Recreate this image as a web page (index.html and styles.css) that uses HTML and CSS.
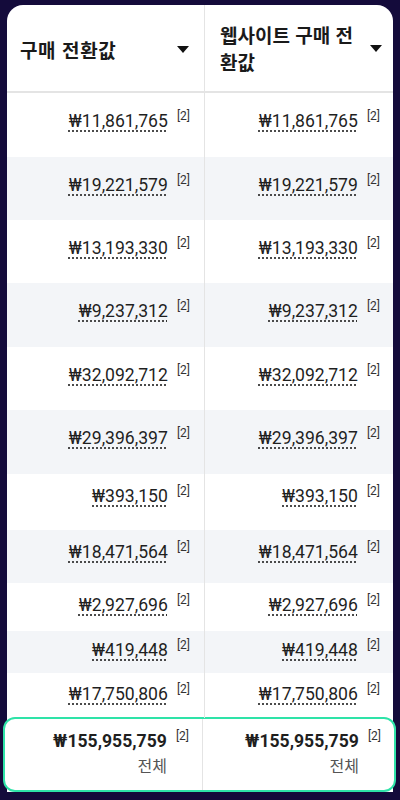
FILE: index.html
```html
<!DOCTYPE html>
<html lang="ko">
<head>
    <meta charset="UTF-8">
    <meta name="viewport" content="width=device-width, initial-scale=1.0">
    <title>구매 전환값</title>
    <link rel="stylesheet" href="styles.css">
</head>
<body>
    <div class="card">
        <div class="head">
            <div class="head-cell">
                <span class="head-title">구매 전환값</span>
                <span class="sort-arrow"></span>
            </div>
            <div class="head-cell">
                <span class="head-title">웹사이트 구매 전<br>환값</span>
                <span class="sort-arrow"></span>
            </div>
        </div>

        <div id="rows"></div>

        <div class="total">
            <div class="cell">
                <div class="value-line"><b>₩155,955,759</b><sup>[2]</sup></div>
                <div class="total-label">전체</div>
            </div>
            <div class="cell">
                <div class="value-line"><b>₩155,955,759</b><sup>[2]</sup></div>
                <div class="total-label">전체</div>
            </div>
        </div>
    </div>

    <script>
        const values = [
            '₩11,861,765', '₩19,221,579', '₩13,193,330', '₩9,237,312',
            '₩32,092,712', '₩29,396,397', '₩393,150', '₩18,471,564',
            '₩2,927,696', '₩419,448', '₩17,750,806'
        ];
        const rowsEl = document.getElementById('rows');

        values.forEach(value => {
            const row = document.createElement('div');
            row.className = 'row';
            for (let i = 0; i < 2; i++) {
                row.innerHTML += `<div class="cell"><div class="value-line"><span class="num">${value}</span><sup>[2]</sup></div></div>`;
            }
            rowsEl.appendChild(row);
        });
    </script>
</body>
</html>
```

FILE: styles.css
```css
body {
    margin: 0;
    background-color: #140b3b;
    font-family: Roboto, "Noto Sans", "Noto Sans CJK KR", sans-serif;
    color: #1f1f1f;
}
.card {
    margin: 5px 7px 0;
    background-color: white;
    border-radius: 16px 16px 0 0;
}
.head, .row, .total {
    display: grid;
    grid-template-columns: 198px 1fr;
}
.head {
    height: 86px;
    border-bottom: 2px solid #e4e4e4;
}
.head-cell {
    display: flex;
    align-items: center;
    justify-content: space-between;
    padding: 2px 15px 0 13px;
    border-right: 1px solid #e4e4e4;
}
.head-cell:last-child {
    border-right: none;
    padding: 0 11px 0 15px;
}
.head-title {
    font-family: "Noto Sans CJK KR", sans-serif;
    font-weight: bold;
    font-size: 19px;
    line-height: 27px;
    color: #1a1a1a;
}
.head-cell:first-child .head-title {
    letter-spacing: 0.6px;
}
.sort-arrow {
    width: 0;
    height: 0;
    border-left: 6px solid transparent;
    border-right: 6px solid transparent;
    border-top: 7px solid #111;
    flex-shrink: 0;
}
.cell {
    display: flex;
    flex-direction: column;
    align-items: flex-end;
    padding: 16px 14px 0 0;
    border-right: 1px solid #e4e4e4;
}
.cell:last-child {
    border-right: none;
    padding-right: 13px;
}
.row:nth-child(even) {
    background-color: #f3f5f8;
}
.row { height: 63px; }
.row:nth-child(1), .row:nth-child(4), .row:nth-child(6) { height: 64px; }
.row:nth-child(7) { height: 56px; }
.row:nth-child(8) { height: 53px; }
.row:nth-child(9) { height: 48px; }
.row:nth-child(10) { height: 42px; }
.row:nth-child(11) { height: 45px; }
.row:nth-child(n+7) .cell { padding-top: 10px; }
.row:nth-child(10) .cell { padding-top: 7px; }
.row:nth-child(11) .cell { padding-top: 9px; }
.value-line {
    display: flex;
    align-items: flex-start;
    line-height: 24px;
    font-size: 17.6px;
}
.num {
    text-decoration: underline dotted #333;
    text-underline-offset: 4px;
}
sup {
    font-size: 12px;
    line-height: 14px;
    margin-left: 9px;
    color: #333;
    vertical-align: top;
}
.total {
    margin: -1px -3px 0 -4px;
    height: 71px;
    border: 2px solid #2ee3a8;
    border-radius: 12px;
    background-color: white;
}
.total .cell {
    padding-top: 10px;
    padding-right: 13px;
}
.total .cell:last-child {
    padding-right: 13px;
}
.total b {
    font-weight: bold;
}
.total-label {
    margin-right: 22px;
    font-family: "Noto Sans CJK KR", sans-serif;
    font-size: 16px;
    line-height: 24px;
    color: #555;
}
```
